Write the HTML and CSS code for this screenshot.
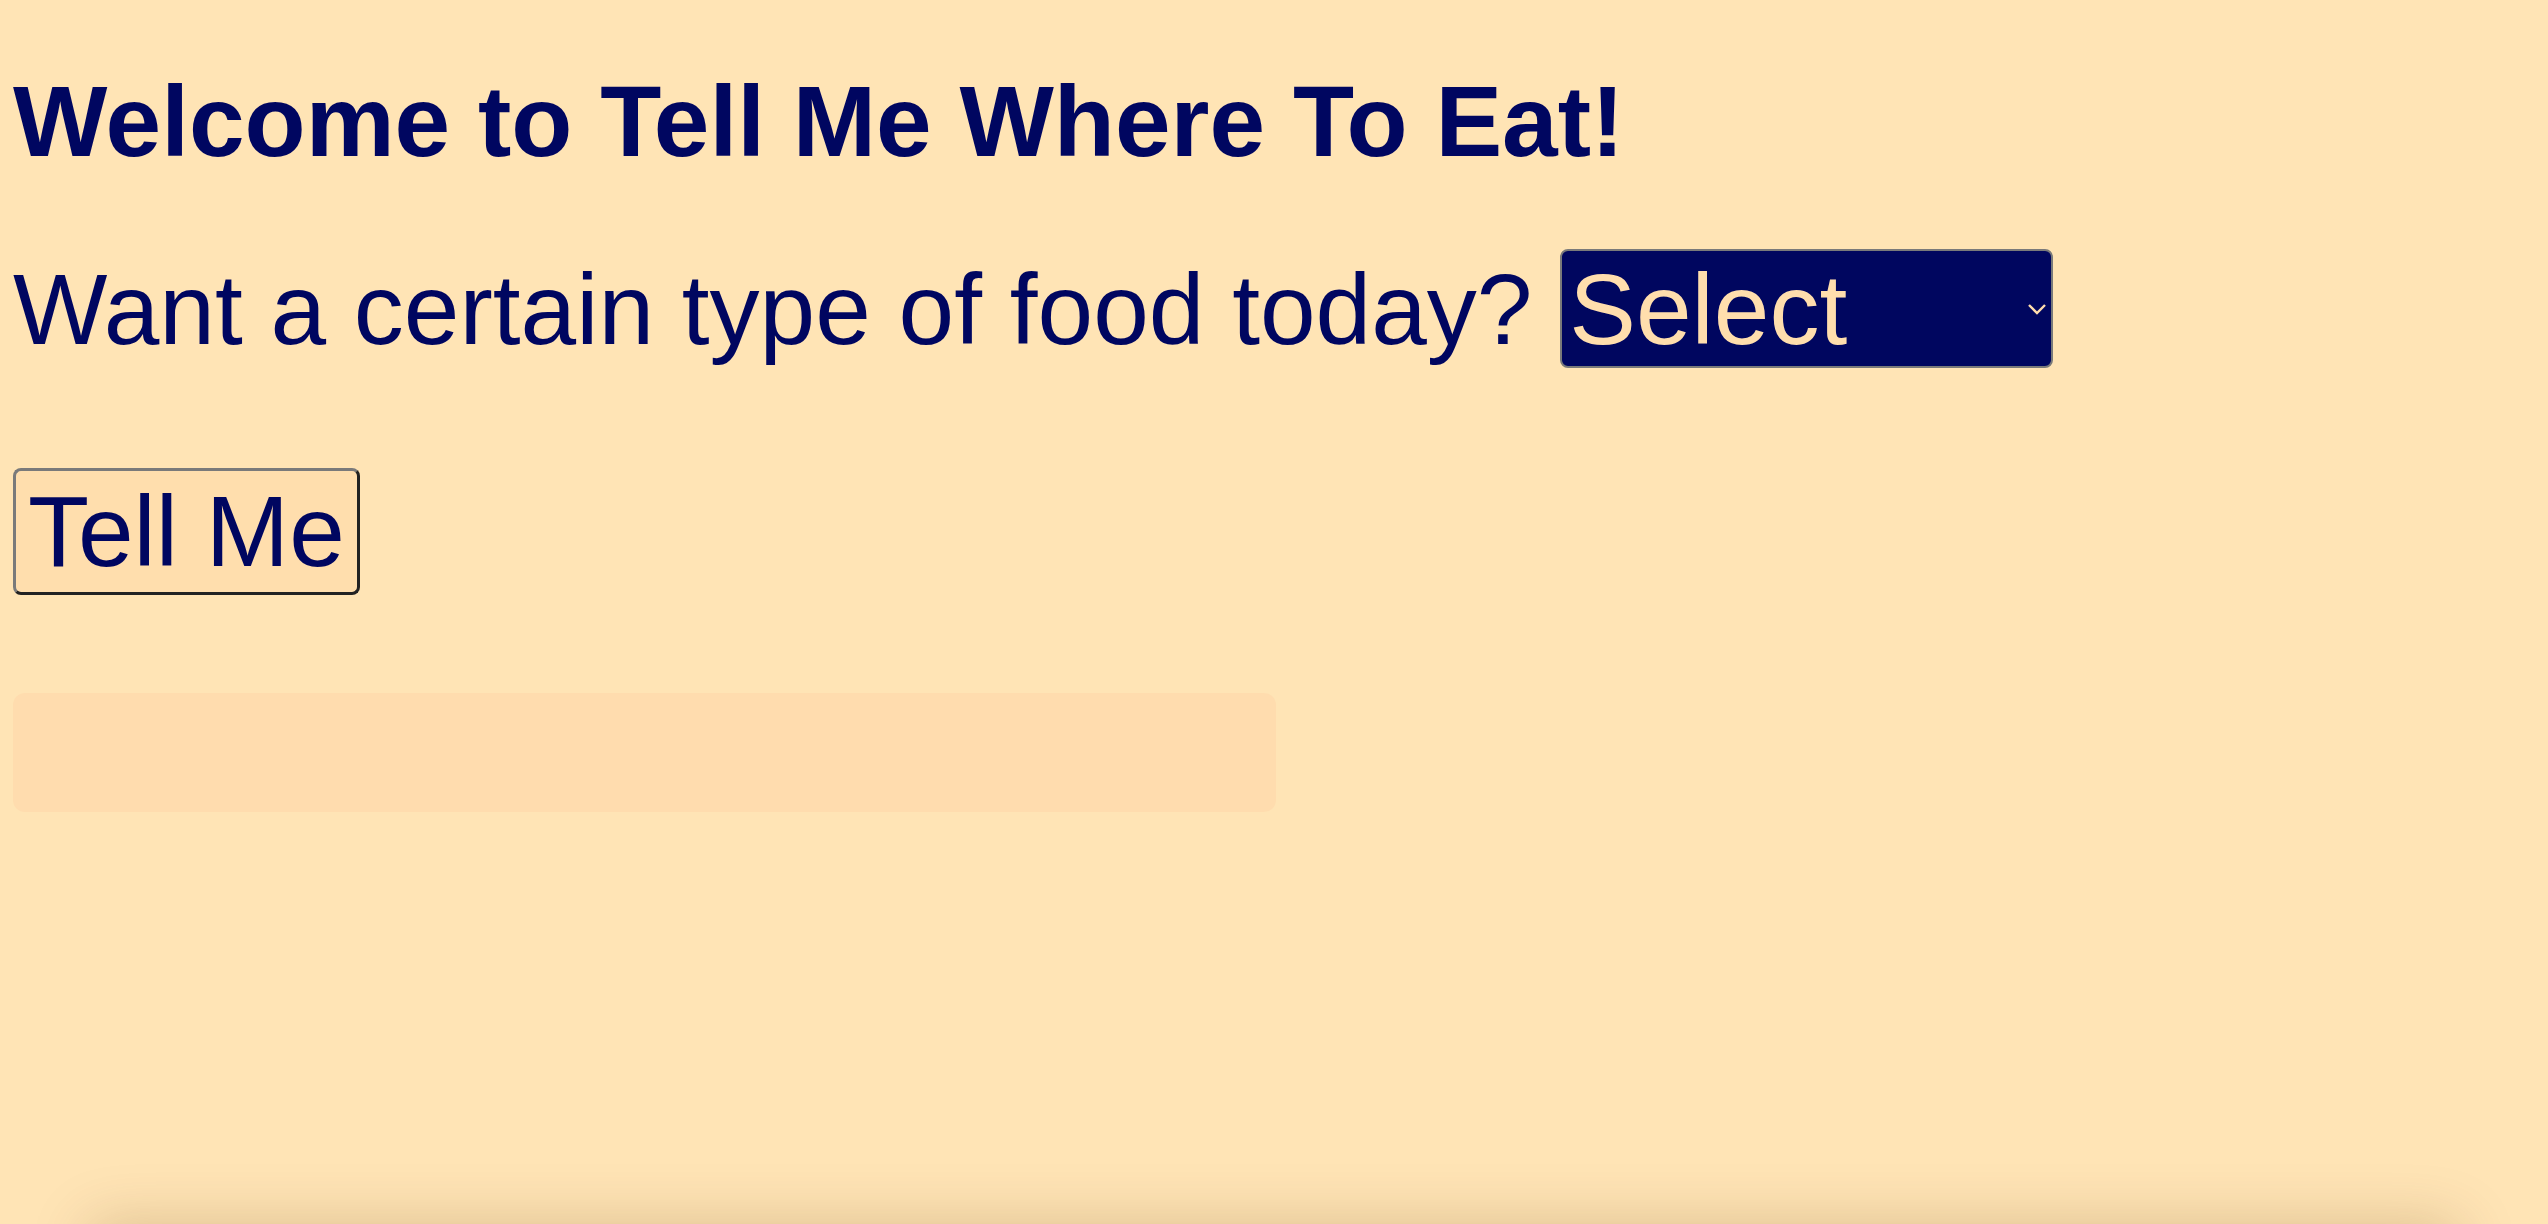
FILE: index.html
```html
<!DOCTYPE html>
<html lang="en">
<head>
<meta charset="utf-8">
<title>Tell Me Where To Eat</title>
<link rel="stylesheet" href="styles.css">
</head>
<body>
<h1 class="title">Welcome to Tell Me Where To Eat!</h1>
<div class="question">
  <label for="food">Want a certain type of food today?</label>
  <span class="select-wrap"><select id="food" class="food-select">
    <option>Select</option>
  </select><svg class="select-arrow" width="20" height="12" viewBox="0 0 20 12"><path d="M2 2 L10 10 L18 2" fill="none" stroke="#FFDEAD" stroke-width="2.4"/></svg></span>
</div>
<p class="actions"><button class="tell-btn" type="button">Tell Me</button></p>
<div class="result"></div>
<div class="bottom-shade"></div>
</body>
</html>
```

FILE: styles.css
```css
html {
  background: #FFE4B5;
}
body {
  margin: 13px;
  background: #FFE4B5;
  color: #000660;
  font-family: "Liberation Sans", Arial, sans-serif;
  font-size: 100px;
}
.title {
  font-size: 1em;
  font-weight: bold;
  margin: 51px 0 70px;
}
.question {
  margin: 0;
}
.select-wrap {
  position: relative;
  display: inline-block;
}
.food-select {
  appearance: none;
  -webkit-appearance: none;
  box-sizing: border-box;
  width: 493px;
  height: 119px;
  margin: 0;
  padding: 0 0 0 7px;
  font-family: "Liberation Sans", Arial, sans-serif;
  font-size: 100px;
  color: #FFDEAD;
  background: #00065F;
  border: 2px solid #7a7a7a;
  border-radius: 8px;
  vertical-align: baseline;
}
.select-arrow {
  position: absolute;
  right: 6px;
  top: 54px;
  pointer-events: none;
}
.actions {
  margin: 100px 0 98px;
}
.tell-btn {
  font-family: "Liberation Sans", Arial, sans-serif;
  font-size: 100px;
  color: #000660;
  background: #FFDEAD;
  margin: 0;
  padding: 3px 12px;
  border: 3px solid;
  border-color: #7a7a7a #222 #222 #7a7a7a;
  border-radius: 8px;
  line-height: normal;
}
.result {
  width: 1263px;
  height: 119px;
  background: #FFDCAE;
  border-radius: 12px;
}
.bottom-shade {
  position: fixed;
  left: 90px;
  right: 90px;
  top: 100%;
  height: 60px;
  box-shadow: 0 0 60px 0 rgba(90, 55, 0, 0.22);
  pointer-events: none;
}
```
